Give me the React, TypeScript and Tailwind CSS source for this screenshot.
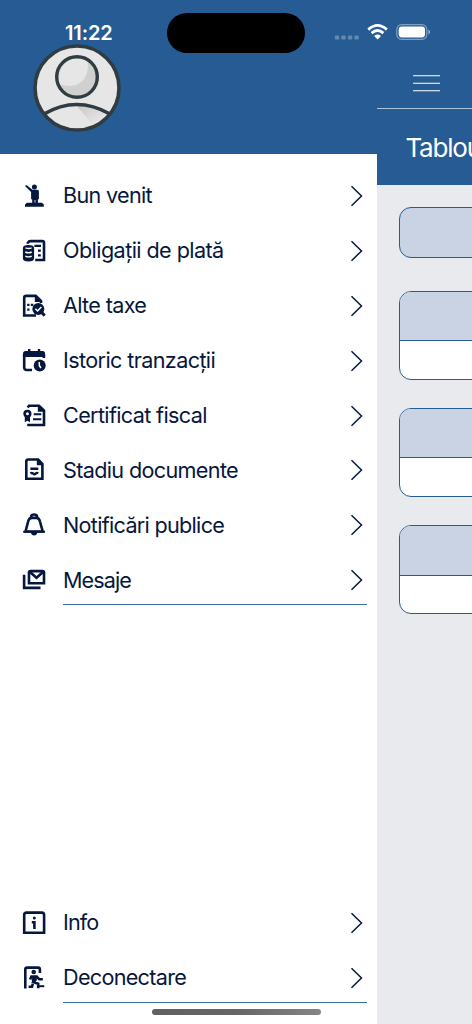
import type { ReactNode } from "react";

function Icon({ children }: { children: ReactNode }) {
  return (
    <svg viewBox="0 0 24 24" className="h-6 w-6 shrink-0" fill="none" stroke="currentColor" strokeWidth="2.6">
      {children}
    </svg>
  );
}

const welcome = (
  <Icon>
    <g fill="currentColor" stroke="none">
      <circle cx="12.4" cy="3" r="2.5" />
      <path d="M3 2.1 4.4.9 10.5 5.7H15.4Q16.9 5.7 16.9 7.4V14.8Q16.9 15.5 15.9 15.5V20H10.2V15.5Q9.1 15.3 9.1 14.4V8Z" />
      <path d="M5 18.8H20L21.8 20.5V22.7H3V20.5Z" />
    </g>
    <path d="M13 16V18.6" stroke="white" strokeWidth="0.8" />
  </Icon>
);
const obligations = (
  <Icon>
    <path d="M5.8 4.8V3.8Q6.8 2.1 8.5 2.1H20.4Q22 2.1 22 3.7V21H13.2" />
    <path d="M12.4 6.8H19M16 11.7h2.8M16 16.4h2.8" strokeWidth="2.3" />
    <path d="M.9 9Q.9 5.9 6.5 5.9T12.1 9V19.2Q12.1 22.5 6.5 22.5T.9 19.2Z" fill="currentColor" stroke="none" />
    <path d="M3.4 8.9Q6.5 10.2 9.6 8.9M3.3 13Q6.5 14.6 9.7 13M3.3 17.1Q6.5 18.7 9.7 17.1" stroke="white" strokeWidth="1.4" />
  </Icon>
);
const taxes = (
  <Icon>
    <path d="M14 21.5H2.2V3.8Q2.2 1.9 4.1 1.9H13.8L19 7V9" />
    <path d="M12.8 1V8H20.2Z" fill="currentColor" stroke="none" />
    <path d="M5.2 10.9h2.3M8.8 10.9h2.5M5.2 15.7h2.3" strokeWidth="2.2" />
    <circle cx="16.3" cy="14.9" r="6" fill="currentColor" stroke="none" />
    <path d="m19.7 18.5 3 3.1" strokeWidth="3" />
    <path d="m13.4 14.8 2.2 2.2 3.7-4.1" stroke="white" strokeWidth="1.5" />
  </Icon>
);
const history = (
  <Icon>
    <path d="M10 21H4.8Q2.2 21 2.2 18.5V6Q2.2 3.5 4.5 3.5H19.5Q21.8 3.5 21.8 6V9" />
    <path d="M.9 5.5Q.9 2.1 4.2 2.1H20Q23.2 2.1 23.2 5.5V8.1H.9ZM6 0H8.4V4H6ZM15.8 0H18.2V4H15.8Z" fill="currentColor" stroke="none" />
    <circle cx="17.7" cy="16.4" r="6" fill="currentColor" stroke="none" />
    <path d="M17.3 12.9V16.5L18.9 19" stroke="white" strokeWidth="1.5" />
  </Icon>
);
const certificate = (
  <Icon>
    <path d="M5.7 3.5 7 1.7H17L22 6.6V21H5.2" />
    <path d="M15.8.5V7.8H23Z" fill="currentColor" stroke="none" />
    <path d="M11.7 10.3H19.3M11 15.2H19.3" strokeWidth="2.1" />
    <circle cx="5.4" cy="9.8" r="2.8" />
    <path d="M2.8 12.4H8V18.2L5.4 16.7 2.8 18.2Z" fill="currentColor" stroke="none" />
  </Icon>
);
const documents = (
  <Icon>
    <path d="M4.3 20.7V3.5Q4.3 1.5 6.3 1.5H16.2L20.4 6V20.7Z" />
    <path d="M14.8.6V7.2H21.5Z" fill="currentColor" stroke="none" />
    <path d="M8.4 10.8H16.3M8.4 15.4Q10 14.6 11.2 15.7T13.6 15.6 16.3 15.2" strokeWidth="2.4" />
  </Icon>
);
const bell = (
  <Icon>
    <path d="M3.5 18.5 6 9Q6.8 4.9 10 4.9H14.2Q17.3 4.9 18.1 9L20.7 18.5Z" />
    <path d="M9.2 5V3.2Q9.5 1.5 12.1 1.5T15 3.2V5" />
    <path d="M1.2 17.8H23V19.8H1.2ZM8.8 19.5H15.5Q14.7 22.5 12.1 22.5T8.8 19.5" fill="currentColor" stroke="none" />
  </Icon>
);
const messages = (
  <Icon>
    <path d="M2.1 6.7V19.9H18.5" />
    <path d="M7 15.2V4.6Q7 3.1 8.5 3.1H20.5Q22 3.1 22 4.6V15.2Z" />
    <path d="m8.2 4.2 6.3 5.5 6.3-5.5" />
  </Icon>
);
const info = (
  <Icon>
    <path d="M2.2 21.7V3.8Q2.2 1.6 4.5 1.6H19.8Q22.1 1.6 22.1 3.8V21.7Z" />
    <path d="M9.8 11.2h2.6V18" />
    <circle cx="12.3" cy="7" r="1.5" fill="currentColor" stroke="none" />
  </Icon>
);
const logout = (
  <Icon>
    <path d="M3.3 22.6V3.6Q3.3 1.6 5.2 1.6H16Q17.9 1.6 17.9 3.5V7" />
    <circle cx="11.7" cy="6" r="2.3" fill="currentColor" stroke="none" />
    <path d="M8.1 13.5 9.4 10.5H13.8L11.1 16.1 16.2 17.8V22.2M10.8 17.7 10 20.8H6.6M14.2 10.2 17.2 13.2H20.8" />
    <path d="M17 20.2H22.3" strokeWidth="2" />
    <path d="M10.2 10.5H14.3L15 14 12.8 17 9.8 15.3Z" fill="currentColor" stroke="none" />
  </Icon>
);

const mainItems = [
  { label: "Bun venit", icon: welcome, spacing: "tracking-[-0.69px]" },
  { label: "Obligații de plată", icon: obligations, spacing: "tracking-[-0.57px]" },
  { label: "Alte taxe", icon: taxes, spacing: "tracking-[-0.66px]" },
  { label: "Istoric tranzacții", icon: history, spacing: "tracking-[-0.61px]" },
  { label: "Certificat fiscal", icon: certificate, spacing: "tracking-[-0.64px]" },
  { label: "Stadiu documente", icon: documents, spacing: "tracking-[-0.65px]" },
  { label: "Notificări publice", icon: bell, spacing: "tracking-[-0.7px]" },
  { label: "Mesaje", icon: messages, spacing: "tracking-[-0.9px]" },
];
const footerItems = [
  { label: "Info", icon: info, spacing: "tracking-[-0.9px]" },
  { label: "Deconectare", icon: logout, spacing: "tracking-[-0.7px]" },
];

function MenuList({ items }: { items: typeof mainItems }) {
  return (
    <ul>
      {items.map((item) => (
        <li key={item.label} className="flex h-[54.9px] items-center pl-[22px] pr-[13.3px] text-[#06173d]">
          {item.icon}
          <span className={`ml-[17px] flex-1 whitespace-nowrap pb-px text-[21.6px] leading-7 ${item.spacing}`}>{item.label}</span>
          <svg viewBox="0 0 14 22" className="h-[22px] w-[14px]" fill="none" stroke="currentColor" strokeWidth="1.5">
            <path d="m1.5 1.3 10 9.7-10 9.7" />
          </svg>
        </li>
      ))}
    </ul>
  );
}

function Avatar() {
  return (
    <svg viewBox="0 0 88 88" className="h-[88px] w-[88px]">
      <defs>
        <clipPath id="disc"><circle cx="44" cy="44" r="42" /></clipPath>
        <linearGradient id="shade" x1="0" y1="0" x2="1" y2="1">
          <stop stopColor="#c8c8c8" /><stop offset=".75" stopColor="#e6e6e6" />
        </linearGradient>
      </defs>
      <circle cx="44" cy="44" r="42" fill="#e6e6e6" />
      <g clipPath="url(#disc)">
        <path d="M43 61Q61 61 75 70L62 84Z" fill="url(#shade)" />
        <circle cx="44" cy="33" r="20.3" fill="#d0d0d0" />
        <path d="M26.5 40A20.3 20.3 0 0 1 54 15.5C58 30 49 42 37 42Q31 42 26.5 40Z" fill="#e6e6e6" />
        <circle cx="44" cy="33" r="20.3" fill="none" stroke="#303c42" strokeWidth="3.4" />
        <path d="M11 70Q43.5 51 77 70" fill="none" stroke="#303c42" strokeWidth="3.4" />
      </g>
      <circle cx="44" cy="44" r="42" fill="none" stroke="#303c42" strokeWidth="3.6" />
    </svg>
  );
}

function StatusBar() {
  return (
    <div className="absolute inset-x-0 top-0 h-[64px]">
      <span className="absolute left-[65px] top-[20.5px] text-[20px] font-semibold leading-6 tracking-[-0.1px] text-white">11:22</span>
      <div className="absolute left-[167px] top-[12.5px] h-[40.5px] w-[138px] rounded-full bg-black" />
      <svg viewBox="0 0 100 24" className="absolute left-[333px] top-[20px] h-6 w-[100px]">
        <g fill="#fff" fillOpacity=".28">
          <rect x="1.8" y="15.5" width="4.4" height="4" rx="1.2" />
          <rect x="8.3" y="15.5" width="4.4" height="4" rx="1.2" />
          <rect x="14.9" y="15.5" width="4.4" height="4" rx="1.2" />
          <rect x="21.4" y="15.5" width="4.4" height="4" rx="1.2" />
        </g>
        <g fill="none" stroke="#fff" strokeWidth="2.8">
          <path d="M35.3 9.6Q44.5 1.2 53.8 9.6" />
          <path d="M38.6 13.1Q44.5 7.8 50.4 13.1" />
        </g>
        <path d="M41.2 15.9Q44.6 13 48 15.9L44.6 19.4Z" fill="#fff" />
        <rect x="63.8" y="4.7" width="30" height="14.6" rx="4.8" fill="none" stroke="#fff" strokeOpacity=".42" strokeWidth="1.2" />
        <rect x="65.7" y="6.6" width="26.3" height="10.8" rx="3.1" fill="#fff" />
        <path d="M95.3 9.5Q97.2 10.3 97.2 12T95.3 14.5Z" fill="#fff" fillOpacity=".48" />
      </svg>
    </div>
  );
}

function PanelCard() {
  return (
    <div className="h-[88.8px] w-[420px] overflow-hidden rounded-[12px] border-[1.3px] border-[#265c93] bg-white">
      <div className="h-[49.2px] border-b-[1.3px] border-[#265c93] bg-[#cad3e4]" />
    </div>
  );
}

export default function App() {
  return (
    <main className="relative flex h-[1024px] w-[472px] overflow-hidden bg-white font-['Inter','Liberation_Sans',sans-serif]">
      <aside className="flex w-[377.4px] shrink-0 flex-col bg-white">
        <header className="h-[154px] shrink-0 bg-[#265c93] pl-[33px] pt-[44px]">
          <Avatar />
        </header>
        <nav className="flex flex-1 flex-col justify-between pb-[21px] pt-[14.5px]">
          <div>
            <MenuList items={mainItems} />
            <div className="-mt-[3.9px] ml-[63px] mr-[10px] h-px bg-[#3b6e9f]" />
          </div>
          <div>
            <MenuList items={footerItems} />
            <div className="-mt-[3.5px] ml-[63px] mr-[10px] h-[1.4px] bg-[#3b6e9f]" />
          </div>
        </nav>
      </aside>
      <section className="flex flex-1 flex-col overflow-hidden bg-[#e9eaee]">
        <header className="flex h-[185.3px] shrink-0 flex-col bg-[#265c93]">
          <div className="h-[108.5px] border-b-[1.3px] border-[#afc3d7] pl-[35.5px] pt-[74.5px]">
            <svg viewBox="0 0 27 18" className="h-[18px] w-[27px]" stroke="#fff" strokeWidth="1.1">
              <path d="M0 .7H27M0 8.2H27M0 15.7H27" />
            </svg>
          </div>
          <h1 className="pl-[28px] pt-[21px] text-[26px] leading-9 tracking-[-1.2px] text-white">Tablou</h1>
        </header>
        <div className="flex flex-col gap-[28.5px] pl-[21.8px] pt-[22px]">
          <div className="mb-[4.5px] h-[50.5px] w-[420px] rounded-[12px] border-[1.3px] border-[#265c93] bg-[#cad3e4]" />
          <PanelCard />
          <PanelCard />
          <PanelCard />
        </div>
      </section>
      <StatusBar />
      <div className="absolute bottom-[9px] left-[151.5px] h-[6px] w-[169px] rounded-full bg-gradient-to-r from-[#606060] via-[#666] to-[#858585]" />
    </main>
  );
}
